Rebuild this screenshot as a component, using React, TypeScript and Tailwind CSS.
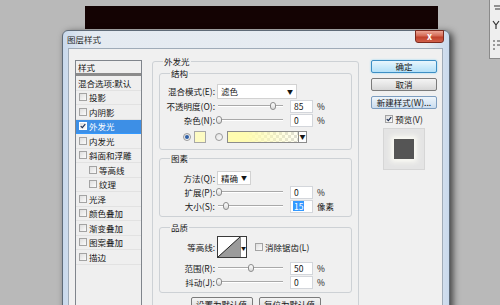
import clsx from "clsx";
import type { ReactNode } from "react";

const styleRows = [
  { label: "投影" },
  { label: "内阴影" },
  { label: "外发光", checked: true, active: true },
  { label: "内发光" },
  { label: "斜面和浮雕" },
  { label: "等高线", sub: true },
  { label: "纹理", sub: true },
  { label: "光泽" },
  { label: "颜色叠加" },
  { label: "渐变叠加" },
  { label: "图案叠加" },
  { label: "描边" },
];

function Check({ checked, className }: { checked?: boolean; className?: string }) {
  return (
    <span
      className={clsx(
        "flex h-[8px] w-[8px] shrink-0 items-center justify-center border border-[#a3a3a3] bg-[linear-gradient(135deg,#dedede,#fbfbfb)]",
        className
      )}
    >
      {checked && (
        <svg viewBox="0 0 8 8" className="h-[6px] w-[6px]">
          <path d="M1 4.2 L3.1 6.3 L7 1.4" stroke="#1d2f55" strokeWidth="1.5" fill="none" />
        </svg>
      )}
    </span>
  );
}

function Radio({ on, className }: { on?: boolean; className?: string }) {
  return (
    <span
      className={clsx(
        "flex h-[8px] w-[8px] shrink-0 items-center justify-center rounded-full border border-[#9a9a9a] bg-[linear-gradient(135deg,#e0e0e0,#fdfdfd)]",
        className
      )}
    >
      {on && <span className="h-[4px] w-[4px] rounded-full bg-[#2f5fa5]" />}
    </span>
  );
}

function Label({ children }: { children: ReactNode }) {
  return <span className="w-[55px] shrink-0 text-right">{children}</span>;
}

function Slider({ thumb }: { thumb: number }) {
  return (
    <div className="relative ml-[3px] h-full w-[65px] shrink-0">
      <div className="absolute inset-x-0 top-[6px] h-[2px] border-t border-[#a9a9a9] bg-white" />
      <div
        className="absolute top-[3px] h-[8px] w-[6px] rounded-[3px] border border-[#8c8c8c] bg-[linear-gradient(#ffffff,#d8d8d8)]"
        style={{ left: thumb - 3 }}
      />
    </div>
  );
}

function Field({ value, selected }: { value: string; selected?: boolean }) {
  return (
    <div className="ml-[7px] flex h-[13px] w-[23px] shrink-0 items-center border border-[#d3d6db] bg-white pl-[2px]">
      <span className={clsx("px-[1px] py-[1px]", selected && "bg-[#3399ff] text-white")}>{value}</span>
    </div>
  );
}

function SliderRow({
  label,
  thumb,
  value,
  unit = "%",
  selected,
}: {
  label: string;
  thumb: number;
  value: string;
  unit?: string;
  selected?: boolean;
}) {
  return (
    <div className="flex h-[14px] items-center">
      <Label>{label}</Label>
      <Slider thumb={thumb} />
      <Field value={value} selected={selected} />
      <span className="ml-[4px]">{unit}</span>
    </div>
  );
}

function Group({ title, className, children }: { title: string; className?: string; children: ReactNode }) {
  return (
    <div className={clsx("relative rounded-[3px] border border-[#cdd1d5]", className)}>
      <span className="absolute left-[10px] top-[-5px] bg-[#f0f0f0] px-[1px] leading-[9px]">{title}</span>
      {children}
    </div>
  );
}

function Select({ text, width }: { text: string; width: string }) {
  return (
    <div className={clsx("ml-[2px] flex h-full items-center justify-between border border-[#d2d2d2] bg-white pl-[3px] pr-[3px]", width)}>
      <span>{text}</span>
      <span className="text-[6px]">▼</span>
    </div>
  );
}

function Button({ children, tone = "gray", className }: { children: ReactNode; tone?: "gray" | "blue" | "focus"; className?: string }) {
  return (
    <div
      className={clsx(
        "flex h-[13px] items-center justify-center rounded-[2px] border",
        tone === "gray" && "border-[#7b7b7b] bg-[linear-gradient(#f4f4f4,#e6e6e6_50%,#d6d6d6)]",
        tone === "blue" && "border-[#7d9dbf] bg-[linear-gradient(#eef5fb,#dce9f5_50%,#cadcee)]",
        tone === "focus" && "border-[#3d8ec4] bg-[linear-gradient(#e9f6fd,#cdebfb_50%,#b4e0f8)] shadow-[0_0_2px_#7fd0f5]",
        className
      )}
    >
      {children}
    </div>
  );
}

function StyleList() {
  return (
    <div className="h-[260px] w-[67px] shrink-0 border border-[#80858c] bg-[#efefef]">
      <div className="flex h-[12px] items-center pl-[2px]">样式</div>
      <div className="h-[3px] bg-[#8b8b8b]" />
      <div className="flex h-[14.5px] items-center border-b border-[#e2e2e2] pl-[2px]">混合选项:默认</div>
      {styleRows.map((row) => (
        <div
          key={row.label}
          className={clsx(
            "flex h-[14.5px] items-center border-b",
            row.active ? "border-[#3399ff] bg-[#3d8fe6] text-white" : "border-[#e2e2e2]",
            row.sub ? "pl-[13px]" : "pl-[3px]"
          )}
        >
          <Check checked={row.checked} className={row.active ? "border-[#ffffff] bg-white" : undefined} />
          <span className="ml-[2px]">{row.label}</span>
        </div>
      ))}
    </div>
  );
}

function OuterGlowPanel() {
  return (
    <Group title="外发光" className="mt-[1px] h-[260px] w-[207px] shrink-0 px-[6px] pt-[11px]">
      <Group title="结构" className="pb-[5px] pt-[10px]">
        <div className="flex h-[15px] items-center">
          <Label>混合模式(E):</Label>
          <Select text="滤色" width="w-[80px]" />
        </div>
        <SliderRow label="不透明度(O):" thumb={55} value="85" />
        <SliderRow label="杂色(N):" thumb={1} value="0" />
        <div className="mt-[3px] flex h-[14px] items-center pl-[23px]">
          <Radio on />
          <span className="ml-[3px] h-[12px] w-[12px] border border-[#a8a8a8] bg-[#fdfbc3]" />
          <Radio className="ml-[9px]" />
          <div className="ml-[4px] flex h-[12px] items-stretch border border-[#8c8c8c]">
            <div className="w-[70px] bg-[repeating-conic-gradient(#dadada_0_25%,#ffffff_0_50%)] bg-[length:6px_6px]">
              <div className="h-full w-full bg-[linear-gradient(to_right,#fffcb0,#fffcb0_25%,rgba(255,252,176,0.15))]" />
            </div>
            <div className="flex w-[8px] items-center justify-center border-l border-[#8c8c8c] bg-white text-[6px]">▼</div>
          </div>
        </div>
      </Group>

      <Group title="图素" className="mt-[8px] pb-[3px] pt-[12px]">
        <div className="flex h-[14px] items-center">
          <Label>方法(Q):</Label>
          <Select text="精确" width="w-[34px]" />
        </div>
        <SliderRow label="扩展(P):" thumb={1} value="0" />
        <SliderRow label="大小(S):" thumb={8} value="15" unit="像素" selected />
      </Group>

      <Group title="品质" className="mt-[10px] pb-[3px] pt-[8px]">
        <div className="flex h-[22px] items-center">
          <Label>等高线:</Label>
          <div className="ml-[2px] flex h-[22px] items-stretch border border-[#3a3a3a] bg-white">
            <svg viewBox="0 0 22 20" className="h-[20px] w-[22px]" preserveAspectRatio="none">
              <polygon points="0,20 22,0 22,20" fill="#9b9b9b" />
              <line x1="0" y1="20" x2="22" y2="0" stroke="#202020" strokeWidth="1" />
            </svg>
            <div className="flex w-[6px] items-center justify-center border-l border-[#8c8c8c] text-[5px]">▼</div>
          </div>
          <Check className="ml-[8px]" />
          <span className="ml-[2px]">消除锯齿(L)</span>
        </div>
        <div className="mt-[3px]">
          <SliderRow label="范围(R):" thumb={33} value="50" />
          <SliderRow label="抖动(J):" thumb={1} value="0" />
        </div>
      </Group>

      <div className="mt-[4px] flex justify-center gap-[6px]">
        <Button className="h-[14px] w-[62px]">设置为默认值</Button>
        <Button className="h-[14px] w-[62px]">复位为默认值</Button>
      </div>
    </Group>
  );
}

function RightColumn() {
  return (
    <div className="ml-[12px] flex w-[66px] shrink-0 flex-col items-center">
      <Button tone="focus" className="w-full">确定</Button>
      <Button className="mt-[5px] w-full">取消</Button>
      <Button tone="blue" className="mt-[5px] w-full">新建样式(W)...</Button>
      <div className="mt-[5px] flex h-[10px] items-center">
        <Check checked />
        <span className="ml-[2px]">预览(V)</span>
      </div>
      <div className="mt-[4px] flex h-[42px] w-[42px] items-center justify-center border border-[#d6d6d6] bg-[#e4e4e4]">
        <div className="h-[20px] w-[20px] bg-[#555555] shadow-[0_0_5px_3px_#fbfbf4]" />
      </div>
    </div>
  );
}

export default function App() {
  return (
    <div className="relative h-[305px] w-[500px] overflow-hidden bg-[#b9b9b9] font-['Noto_Sans_CJK_SC','Liberation_Sans',sans-serif] text-[8.5px] leading-none text-[#151515]">
      {/* canvas behind the dialog */}
      <div className="absolute left-[85px] top-[6px] h-[23px] w-[353px] bg-[#140303]" />

      {/* docked panel at the right edge */}
      <div className="absolute left-[489px] top-0 h-[59px] w-[11px] border-b border-l border-[#8a8a8a] bg-[#eeeeee]">
        <svg viewBox="0 0 11 59" className="h-[59px] w-[11px]">
          <path d="M4 6 H10 M5 9 H10" stroke="#333" strokeWidth="1.2" />
          <path d="M3 21 L6 25 L9 21 M6 25 V29" stroke="#333" strokeWidth="1.2" fill="none" />
          <path d="M3 41 H5 M7 41 H10 M3 45 H5 M7 45 H10 M3 49 H5" stroke="#444" strokeWidth="1.2" />
        </svg>
      </div>

      {/* dialog window */}
      <div className="absolute left-[62px] top-[30px] flex h-[290px] w-[388px] flex-col rounded-t-[6px] border border-[#5f6b78] bg-[linear-gradient(to_right,#c9d9ec,#e4eaf1_6%,#e8edf2_94%,#c9d9ec)] shadow-[3px_2px_7px_rgba(0,0,0,0.65)]">
        <div className="flex h-[17px] shrink-0 items-start justify-between pl-[4px]">
          <span className="mt-[4px] text-[#2a2a2a]">图层样式</span>
          <div className="mr-[5px] mt-[-1px] flex h-[13px] w-[29px] items-center justify-center rounded-b-[3px] border border-[#7c2a1e] bg-[linear-gradient(#eba595,#d46a55_45%,#c0412b_55%,#d0604a)]">
            <span className="text-[9px] font-bold text-white">x</span>
          </div>
        </div>
        <div className="ml-[5px] mr-[6px] flex flex-1 items-start border border-[#9fabb8] bg-[#f0f0f0] pl-[6px] pt-[11px]">
          <StyleList />
          <div className="ml-[10px]">
            <OuterGlowPanel />
          </div>
          <RightColumn />
        </div>
      </div>
    </div>
  );
}
